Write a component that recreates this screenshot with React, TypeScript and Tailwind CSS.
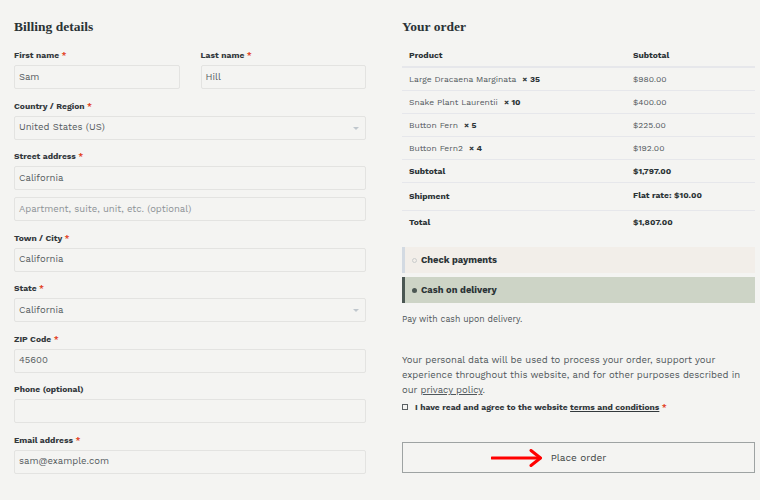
import React from "react";

const sans = "font-['Work_Sans','Open_Sans','Liberation_Sans',sans-serif]";

function Req() {
  return <span className="text-[#e2401c]"> *</span>;
}

function Label({ text, required = true }: { text: string; required?: boolean }) {
  return (
    <div className="text-[8.5px] font-bold leading-[12px] mb-[4px] text-[#33393d]">
      {text}
      {required && <Req />}
    </div>
  );
}

function Input({ value, placeholder, select }: { value?: string; placeholder?: string; select?: boolean }) {
  return (
    <div className="relative h-[24px] border border-[#e3e3e1] rounded-[2px] flex items-center px-[4px] text-[9.5px]">
      {value ? (
        <span className="text-[#555b5e]">{value}</span>
      ) : (
        <span className="text-[#8d9296]">{placeholder}</span>
      )}
      {select && (
        <span className="absolute right-[6px] top-[10px] w-0 h-0 border-l-[3px] border-r-[3px] border-t-[3px] border-l-transparent border-r-transparent border-t-[#c0c7cd]" />
      )}
    </div>
  );
}

function Field({ label, value, placeholder, required = true, select }: { label: string; value?: string; placeholder?: string; required?: boolean; select?: boolean }) {
  return (
    <div className="mb-[10.5px]">
      <Label text={label} required={required} />
      <Input value={value} placeholder={placeholder} select={select} />
    </div>
  );
}

const items = [
  { name: "Large Dracaena Marginata", qty: 35, price: "$980.00" },
  { name: "Snake Plant Laurentii", qty: 10, price: "$400.00" },
  { name: "Button Fern", qty: 5, price: "$225.00" },
  { name: "Button Fern2", qty: 4, price: "$192.00" },
];

export default function App() {
  return (
    <div className={`w-[760px] h-[500px] bg-[#f4f4f2] flex gap-[36px] pl-[14px] pt-[18px] overflow-hidden ${sans}`}>
      {/* billing */}
      <div className="w-[352px] flex flex-col">
        <h2 className="font-['Liberation_Serif',serif] font-bold text-[13.5px] leading-[18px] text-[#2b3336] mb-[13px]">
          Billing details
        </h2>
        <div className="flex gap-[21px]">
          <div className="flex-1">
            <Field label="First name" value="Sam" />
          </div>
          <div className="flex-1">
            <Field label="Last name" value="Hill" />
          </div>
        </div>
        <Field label="Country / Region" value="United States (US)" select />
        <div className="mb-[10.5px]">
          <Label text="Street address" />
          <Input value="California" />
          <div className="mt-[7px]">
            <Input placeholder="Apartment, suite, unit, etc. (optional)" />
          </div>
        </div>
        <Field label="Town / City" value="California" />
        <Field label="State" value="California" select />
        <Field label="ZIP Code" value="45600" />
        <Field label="Phone (optional)" required={false} />
        <Field label="Email address" value="sam@example.com" />
      </div>

      {/* order */}
      <div className="w-[353px] flex flex-col">
        <h2 className="font-['Liberation_Serif',serif] font-bold text-[13.5px] leading-[18px] text-[#2b3336] mb-[9px]">
          Your order
        </h2>
        <div className="text-[8.5px]">
          <div className="flex h-[23px] items-center border-b-2 border-[#e6e7eb] font-bold text-[#2b3336]">
            <div className="w-[231px] pl-[7px]">Product</div>
            <div>Subtotal</div>
          </div>
          {items.map((it) => (
            <div key={it.name} className="flex h-[23px] items-center border-b border-[#e6e7eb]">
              <div className="w-[231px] pl-[7px] text-[#50575b]">
                {it.name}
                <span className="font-bold text-[#2b3336] ml-[6px]">× {it.qty}</span>
              </div>
              <div className="text-[#50575b]">{it.price}</div>
            </div>
          ))}
          <div className="flex h-[23px] items-center border-b border-[#e6e7eb] font-bold text-[#2b3336]">
            <div className="w-[231px] pl-[7px]">Subtotal</div>
            <div>$1,797.00</div>
          </div>
          <div className="flex h-[28px] border-b border-[#e6e7eb] font-bold text-[#2b3336]">
            <div className="w-[231px] pl-[7px] self-center">Shipment</div>
            <div className="pt-[6px]">Flat rate: $10.00</div>
          </div>
          <div className="flex h-[23px] items-center font-bold text-[#2b3336]">
            <div className="w-[231px] pl-[7px]">Total</div>
            <div>$1,807.00</div>
          </div>
        </div>

        <div className="mt-[13px] flex flex-col gap-[4px]">
          <div className="h-[26px] bg-[#f2eee9] border-l-[3px] border-[#d3dae2] flex items-center pl-[7px] gap-[4px]">
            <span className="w-[5px] h-[5px] rounded-full border border-[#c9cccc]" />
            <span className="text-[9.3px] font-bold text-[#2b3336]">Check payments</span>
          </div>
          <div className="h-[26px] bg-[#cdd4c6] border-l-[3px] border-[#4b5753] flex items-center pl-[7px] gap-[4px]">
            <span className="w-[5px] h-[5px] rounded-full bg-[#4b5753]" />
            <span className="text-[9.3px] font-bold text-[#2b3336]">Cash on delivery</span>
          </div>
        </div>

        <p className="mt-[10px] text-[8.7px] leading-[12px] text-[#50575b]">Pay with cash upon delivery.</p>

        <p className="mt-[27px] text-[9.5px] leading-[15px] text-[#50575b]">
          Your personal data will be used to process your order, support your experience throughout this website, and for other purposes described in our{" "}
          <span className="underline">privacy policy</span>.
        </p>

        <div className="mt-[4px] flex items-center gap-[7px] text-[8.5px] leading-[12px]">
          <span className="w-[6px] h-[6px] border border-[#5a6064]" />
          <span className="font-bold text-[#33393d]">
            I have read and agree to the website <span className="underline">terms and conditions</span>
            <Req />
          </span>
        </div>

        <div className="relative mt-[29px] h-[31px] border border-[#9ea3a3] flex items-center justify-center text-[10px] text-[#3d4545]">
          Place order
          <svg className="absolute left-[88px] top-[6px]" width="52" height="18" viewBox="0 0 52 18">
            <path d="M1 9 H49" stroke="#ff0000" strokeWidth="3" strokeLinecap="round" />
            <path d="M40 1.5 L49.5 9 L40 16.5" stroke="#ff0000" strokeWidth="3" fill="none" strokeLinecap="round" strokeLinejoin="round" />
          </svg>
        </div>
      </div>
    </div>
  );
}
